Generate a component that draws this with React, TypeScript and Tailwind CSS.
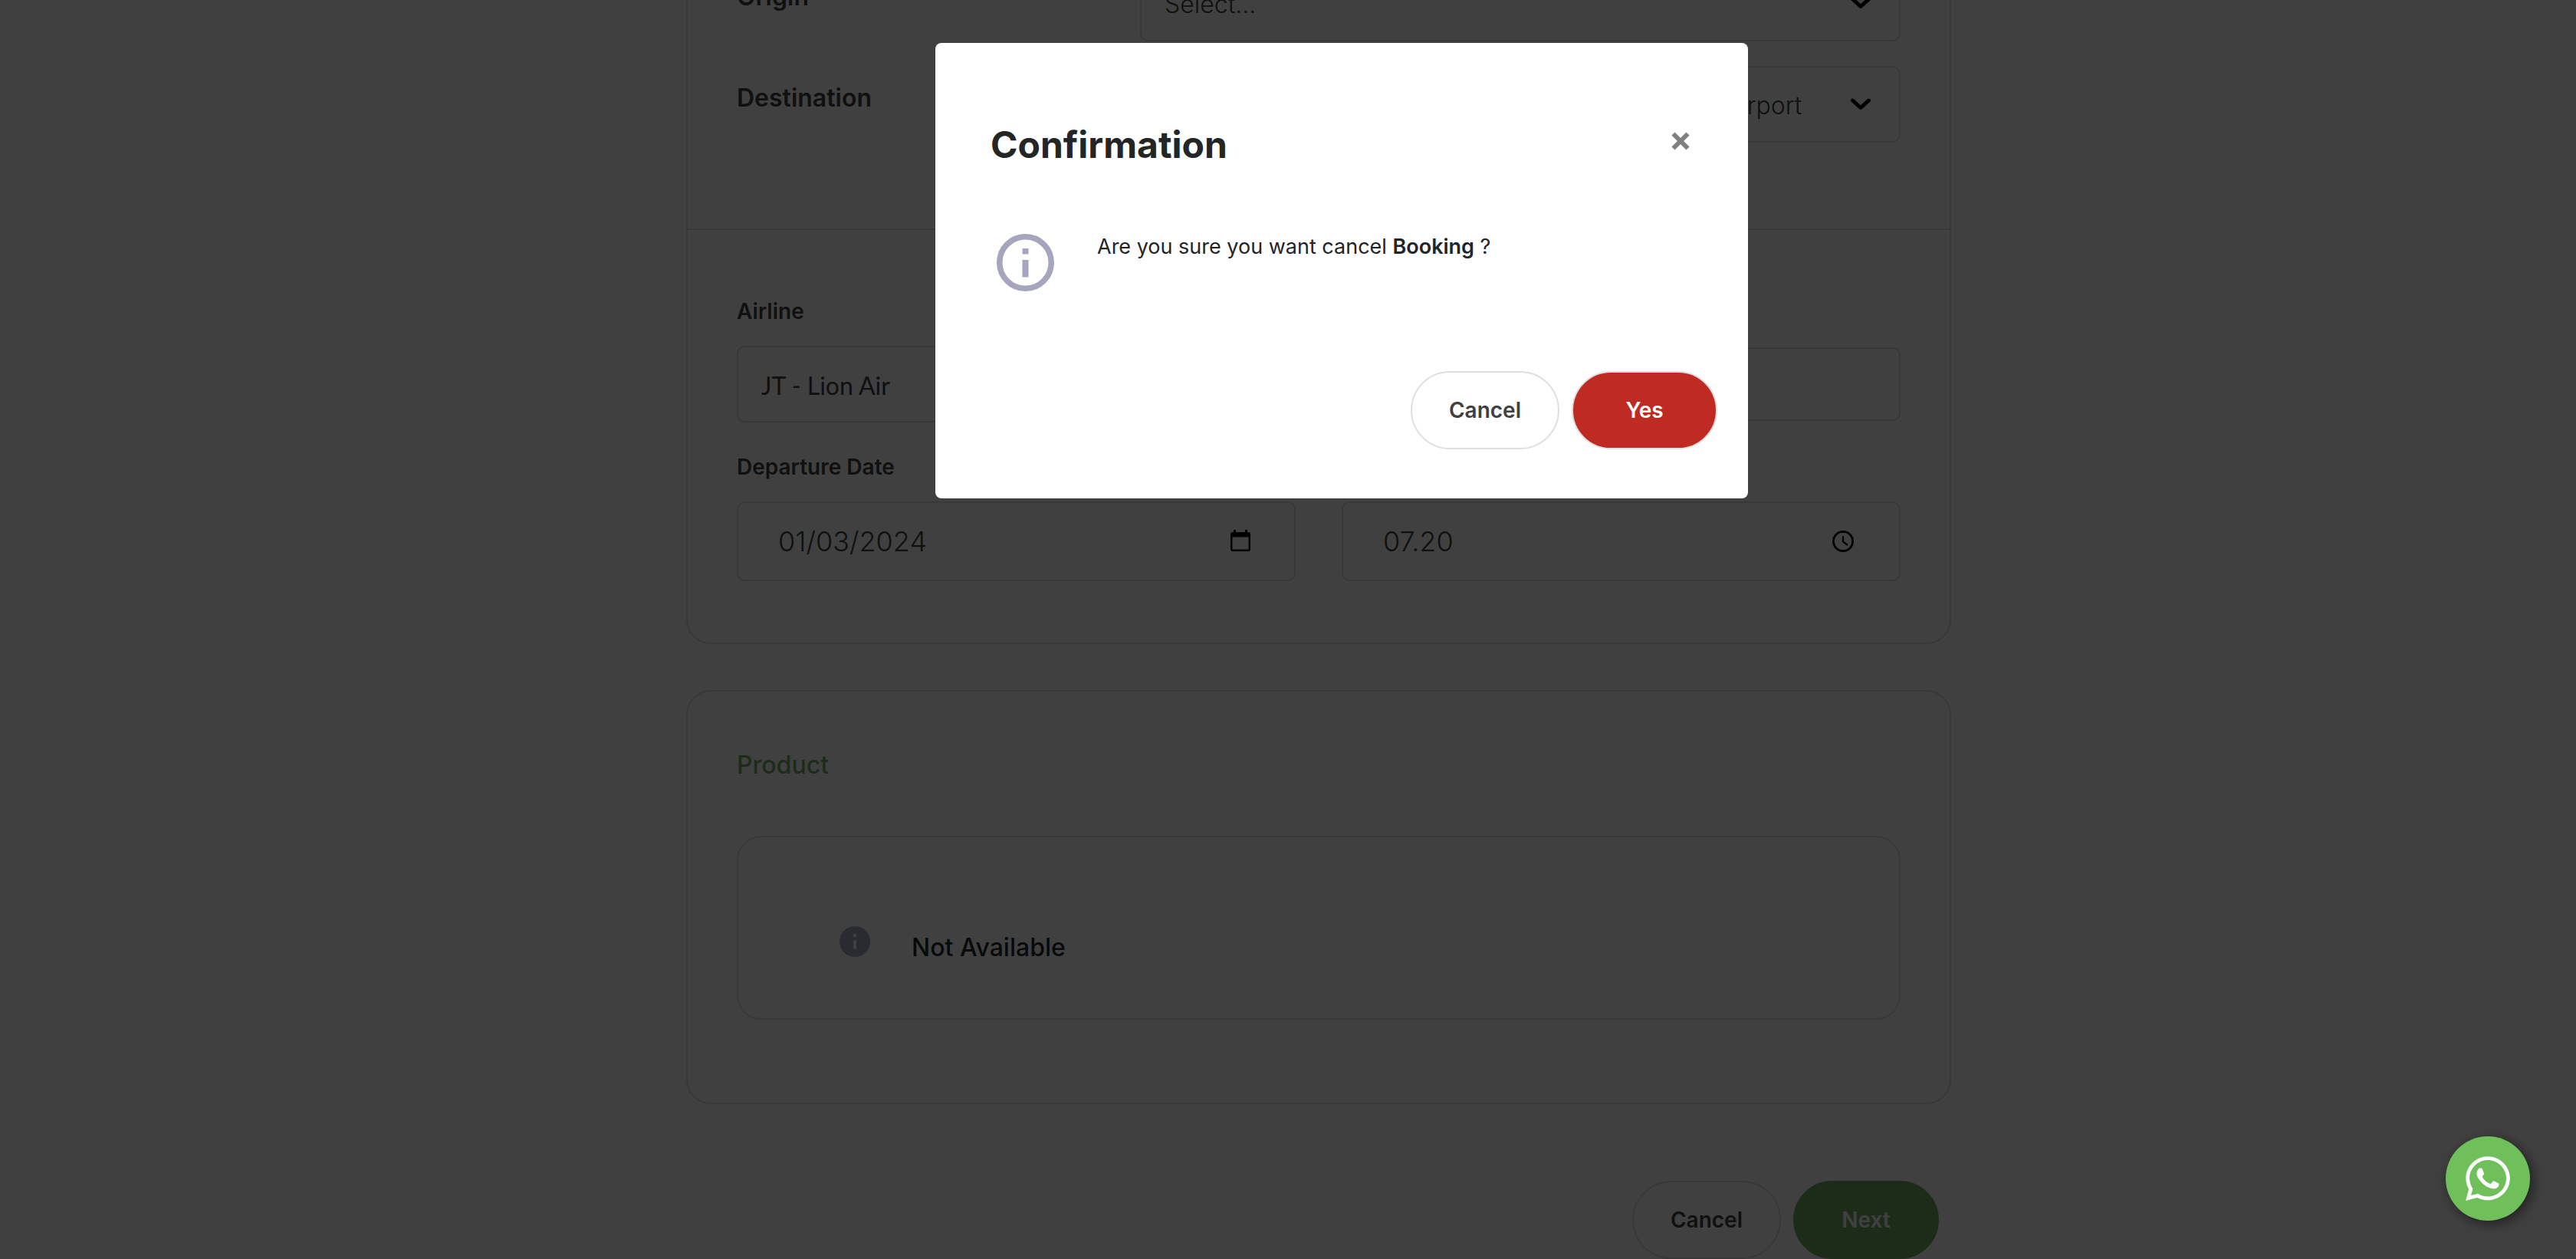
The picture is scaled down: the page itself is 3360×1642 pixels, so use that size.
import { useId, useState } from "react";
import type { ReactNode } from "react";
import { FaWhatsapp } from "react-icons/fa";

const fieldBox =
  "w-full rounded-[10px] border-2 border-[#dfdfdf] bg-transparent text-[#404040]";

function Chevron() {
  return (
    <svg
      viewBox="0 0 26 15"
      className="pointer-events-none absolute top-1/2 right-[39px] h-[15px] w-[26px] -translate-y-1/2"
      fill="none"
      stroke="#000"
      strokeWidth="5"
      strokeLinecap="round"
      strokeLinejoin="round"
      aria-hidden="true"
    >
      <path d="M2.5 2.5 13 12 23.5 2.5" />
    </svg>
  );
}

function Select({ id, value, font = "font-light" }: { id: string; value: string; font?: string }) {
  return (
    <div className="relative">
      <select
        id={id}
        defaultValue={value}
        className={`${fieldBox} ${font} h-[100px] appearance-none pt-1 pr-24 pl-[30px] text-[32px]`}
      >
        <option>{value}</option>
      </select>
      <Chevron />
    </div>
  );
}

function Row({ label, value }: { label: string; value: string }) {
  const id = useId();
  return (
    <div className="grid grid-cols-[526fr_992fr]">
      <label htmlFor={id} className="pt-5 text-[32px] leading-[44px] font-semibold text-[#404040]">
        {label}
      </label>
      <Select id={id} value={value} />
    </div>
  );
}

function Field({ label, children }: { label: string; children: (id: string) => ReactNode }) {
  const id = useId();
  return (
    <div className="flex flex-col gap-[27px]">
      <label htmlFor={id} className="text-[28px] leading-9 font-semibold text-[#404040]">
        {label}
      </label>
      {children(id)}
    </div>
  );
}

function IconInput({ id, value, icon }: { id: string; value: string; icon: ReactNode }) {
  return (
    <div className="relative">
      <input
        id={id}
        type="text"
        defaultValue={value}
        className={`${fieldBox} h-[104px] pr-24 pl-[52px] text-[36px] font-light`}
      />
      {icon}
    </div>
  );
}

function CalendarIcon() {
  return (
    <svg
      viewBox="0 0 26 28"
      className="pointer-events-none absolute top-[37px] right-[59px] h-7 w-[26px]"
      aria-hidden="true"
    >
      <path
        fillRule="evenodd"
        d="M4 0h3v3h12V0h3v3h1a3 3 0 0 1 3 3v19a3 3 0 0 1-3 3H3a3 3 0 0 1-3-3V6a3 3 0 0 1 3-3h1ZM2.500 9.500V25.500h21V9.500Z"
      />
    </svg>
  );
}

function ClockIcon() {
  return (
    <svg
      viewBox="0 0 28 28"
      className="pointer-events-none absolute top-[38px] right-[61px] size-7"
      fill="none"
      stroke="#000"
      aria-hidden="true"
    >
      <circle cx="14" cy="14" r="12.600" strokeWidth="2.800" />
      <path d="M14 7v7.500l6 4.500" strokeWidth="2.200" />
    </svg>
  );
}

const pill =
  "flex h-[102px] items-center justify-center rounded-full border-2 px-10 text-[28px] font-semibold";

export default function App() {
  const [open, setOpen] = useState(true);

  return (
    <div className="relative h-screen overflow-hidden bg-white pl-20 font-['Inter',sans-serif]">
      <main className="mx-auto -mt-28 w-full max-w-[1650px]">
        <section className="rounded-4xl border-2 border-[#dfdfdf]">
          <div className="flex flex-col gap-8 border-b-2 border-[#dfdfdf] px-16 pt-16 pb-28">
            <Row label="Origin" value="Select..." />
            <Row label="Destination" value="CGK - Tangerang, Soekarno - Hatta International Airport" />
          </div>
          <div className="grid grid-cols-2 gap-x-[60px] gap-y-10 px-16 pt-[88px] pb-20">
            <Field label="Airline">
              {(id) => (
                <Select id={id} value="JT - Lion Air" font="font-['Lato','Inter',sans-serif] font-normal" />
              )}
            </Field>
            <Field label="Flight Number">
              {(id) => (
                <div className="flex h-[100px] items-center">
                  <input id={id} type="text" className={`${fieldBox} h-24 px-8 text-[32px] font-light`} />
                </div>
              )}
            </Field>
            <Field label="Departure Date">
              {(id) => <IconInput id={id} value="01/03/2024" icon={<CalendarIcon />} />}
            </Field>
            <Field label="Departure Time">
              {(id) => <IconInput id={id} value="07.20" icon={<ClockIcon />} />}
            </Field>
          </div>
        </section>

        <section className="mt-[60px] rounded-4xl border-2 border-[#dfdfdf] px-16 pt-[72px] pb-[108px]">
          <h2 className="text-[32px] leading-[48px] font-medium text-[#74b066]">Product</h2>
          <div className="mt-[68px] flex h-60 items-start rounded-4xl border-2 border-[#dfdfdf] pt-[116px] pl-[132px]">
            <svg viewBox="0 0 40 40" className="size-10 shrink-0" aria-hidden="true">
              <circle cx="20" cy="20" r="20" fill="#a8a8c4" />
              <rect x="18" y="10" width="4" height="4" fill="#fff" />
              <rect x="18" y="18" width="4" height="12" rx="2" fill="#fff" />
            </svg>
            <p className="mt-1 ml-[54px] text-[32px] leading-[48px] font-medium text-[#222926]">
              Not Available
            </p>
          </div>
        </section>

        <div className="mt-[100px] flex justify-end gap-4 pr-4">
          <button type="button" className={`${pill} min-w-[194px] border-[#dfdfdf] text-[#404040]`}>
            Cancel
          </button>
          <button type="button" className={`${pill} min-w-[190px] border-[#74b066] bg-[#74b066] text-white`}>
            Next
          </button>
        </div>
      </main>

      {open && (
        <div className="fixed inset-0 flex items-start justify-center bg-black/75 pt-14 pl-[140px]">
          <div
            role="dialog"
            aria-modal="true"
            aria-labelledby="confirm-title"
            className="w-full max-w-[1060px] rounded-lg bg-white pt-[100px] pb-16"
          >
            <div className="flex items-start justify-between px-[72px]">
              <h1 id="confirm-title" className="text-[48px] leading-[66px] font-bold text-[#242625]">
                Confirmation
              </h1>
              <button
                type="button"
                aria-label="Close"
                onClick={() => setOpen(false)}
                className="mt-3 p-1"
              >
                <svg viewBox="0 0 24 24" className="size-6" stroke="#808080" strokeWidth="6">
                  <path d="M2.500 2.500 21.500 21.500M21.500 2.500 2.500 21.500" />
                </svg>
              </button>
            </div>
            <div className="mt-[83px] flex items-start pl-20">
              <svg viewBox="0 0 75 75" className="size-[75px] shrink-0" aria-hidden="true">
                <circle cx="37.500" cy="37.500" r="33.750" fill="none" stroke="#a5a5be" strokeWidth="7.500" />
                <rect x="33.500" y="19" width="8" height="7.500" fill="#a5a5be" />
                <rect x="33.500" y="34" width="8" height="22.500" fill="#a5a5be" />
              </svg>
              <p className="-mt-1 ml-14 text-[27px] leading-[42px] text-[#212529]">
                Are you sure you want cancel <strong className="font-semibold">Booking</strong> ?
              </p>
            </div>
            <div className="mt-[104px] flex justify-end gap-4 pr-10">
              <button
                type="button"
                onClick={() => setOpen(false)}
                className={`${pill} min-w-[194px] border-[#dfdfdf] bg-white text-[#404040]`}
              >
                Cancel
              </button>
              <button
                type="button"
                onClick={() => setOpen(false)}
                className={`${pill} min-w-[190px] border-[#dfdfdf] bg-[#bf2b22] text-white`}
              >
                Yes
              </button>
            </div>
          </div>
        </div>
      )}

      <a
        href="#whatsapp"
        aria-label="WhatsApp"
        className="fixed right-[60px] bottom-[50px] flex size-[110px] items-center justify-center rounded-full bg-[#6fbf5b] text-white shadow-[4px_4px_16px_rgba(0,0,0,0.5)]"
      >
        <FaWhatsapp className="size-[66px]" />
      </a>
    </div>
  );
}
